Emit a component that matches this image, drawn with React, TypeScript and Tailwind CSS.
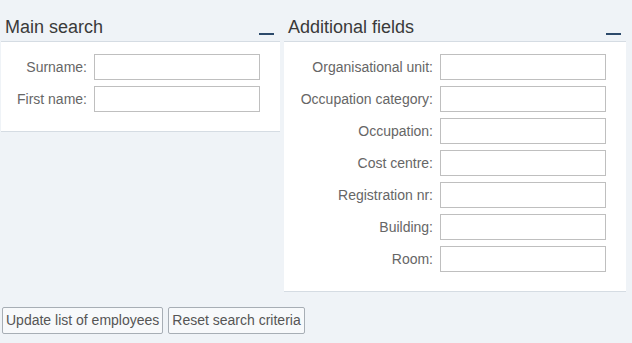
import React from 'react';

const MAIN = ['Surname:', 'First name:'];
const EXTRA = [
  'Organisational unit:',
  'Occupation category:',
  'Occupation:',
  'Cost centre:',
  'Registration nr:',
  'Building:',
  'Room:',
];

function Field({ label, labelW }: { label: string; labelW: string }) {
  return (
    <div className="flex items-center gap-[7px] h-[26px]">
      <label className={`${labelW} text-right text-[14px] text-[#666] whitespace-nowrap`}>{label}</label>
      <input className="w-[166px] h-[26px] border border-[#bfbfbf] bg-white outline-none" />
    </div>
  );
}

function Panel({ title, width, labelW, fields, barRight }: { title: string; width: string; labelW: string; fields: string[]; barRight: string }) {
  return (
    <section className={`${width} flex flex-col`}>
      <div className="h-[41px] flex items-start justify-between">
        <h2 className="pl-[4px] pt-[15px] text-[18px] leading-[24px] text-[#3a3a3a]">{title}</h2>
        <span className={`mt-[33px] ${barRight} w-[15px] h-[2px] bg-[#2c4a6b]`} />
      </div>
      <div className="bg-white border-t border-b border-[#d5dce3] pt-[12px] pb-[19px] flex flex-col gap-[6px]">
        {fields.map((f) => (
          <Field key={f} label={f} labelW={labelW} />
        ))}
      </div>
    </section>
  );
}

export default function App() {
  return (
    <div className="w-[632px] h-[343px] bg-[#eff3f7] overflow-hidden" style={{ fontFamily: '"Liberation Sans", Arial, sans-serif' }}>
      <div className="flex items-start pl-[1px] gap-[4px]">
        <Panel title="Main search" width="w-[279px]" labelW="w-[86px]" fields={MAIN} barRight="mr-[6px]" />
        <Panel title="Additional fields" width="w-[342px]" labelW="w-[149px]" fields={EXTRA} barRight="mr-[5px]" />
      </div>
      <div className="flex gap-[5px] pl-[2px] mt-[15px]">
        <button className="h-[27px] px-[3px] border border-[#a7aeb5] rounded-[2px] bg-[#f7f9fb] text-[14px] text-[#555]">
          Update list of employees
        </button>
        <button className="h-[27px] px-[3px] border border-[#a7aeb5] rounded-[2px] bg-[#f7f9fb] text-[14px] text-[#555]">
          Reset search criteria
        </button>
      </div>
    </div>
  );
}
